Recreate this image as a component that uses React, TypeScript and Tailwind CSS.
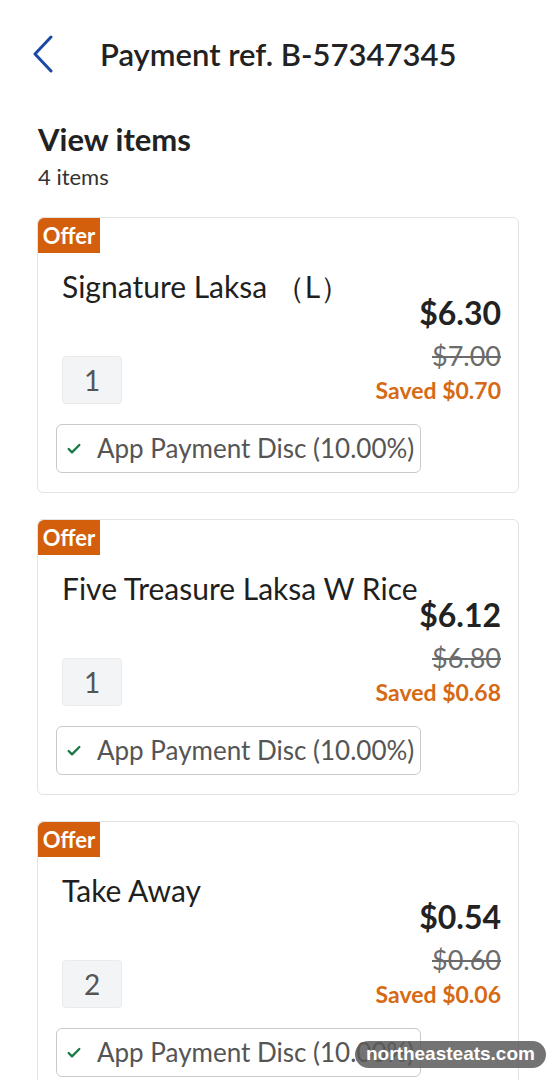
import { Check } from "lucide-react";

type Item = {
  name: string;
  qty: number;
  price: string;
  original: string;
  saved: string;
};

const ITEMS: Item[] = [
  { name: "Signature Laksa （L）", qty: 1, price: "$6.30", original: "$7.00", saved: "$0.70" },
  { name: "Five Treasure Laksa W Rice", qty: 1, price: "$6.12", original: "$6.80", saved: "$0.68" },
  { name: "Take Away", qty: 2, price: "$0.54", original: "$0.60", saved: "$0.06" },
  { name: "Take Away", qty: 2, price: "$0.54", original: "$0.60", saved: "$0.06" },
];

function ItemCard({ item }: { item: Item }) {
  return (
    <div className="border border-[#e3e3e3] rounded-md pl-[18px] pr-[17px] pb-[19px]">
      <div className="-ml-[18px] h-[35px] w-[62px] bg-[#d35f0c] rounded-tl-md flex items-center justify-center text-white text-[22px] font-bold">
        Offer
      </div>
      <div className="ml-[6px] mt-[16px] text-[30px] leading-[34px] text-[#1f1f1f] whitespace-nowrap">
        {item.name}
      </div>
      <div className="flex items-end justify-between -mt-[8px]">
        <div className="ml-[6px] mb-[1px] w-[60px] h-[48px] bg-[#f3f4f5] border border-[#ebebeb] rounded-sm flex items-center justify-center text-[28px] text-[#555]">
          {item.qty}
        </div>
        <div className="flex flex-col items-end">
          <div className="text-[32px] leading-[36px] font-bold text-[#222]">{item.price}</div>
          <div className="mt-[9px] text-[27px] leading-[32px] text-[#6b6b6b] line-through">{item.original}</div>
          <div className="mt-[3px] text-[23px] leading-[30px] font-bold text-[#d66a14]">Saved {item.saved}</div>
        </div>
      </div>
      <div className="mt-[19px] inline-flex items-center h-[49px] pl-[9px] pr-[6px] gap-[15px] border border-[#c9c9c9] rounded-md">
        <Check className="w-[16px] h-[16px] text-[#177a45]" strokeWidth={3.5} />
        <span className="text-[26px] text-[#555] whitespace-nowrap">App Payment Disc (10.00%)</span>
      </div>
    </div>
  );
}

export default function App() {
  return (
    <div className="relative w-[556px] h-[1080px] overflow-hidden bg-white font-['Lato','Noto_Sans',sans-serif]">
      <div className="flex items-center h-[108px] pl-[32px]">
        <svg width="22" height="38" viewBox="0 0 22 38" className="shrink-0">
          <path d="M19 2 L3 19 L19 36" fill="none" stroke="#1a4aa6" strokeWidth="3" strokeLinecap="round" strokeLinejoin="round" />
        </svg>
        <h1 className="ml-[46px] text-[31px] font-semibold text-[#222]">Payment ref. B-57347345</h1>
      </div>
      <div className="px-[38px] pt-[13px]">
        <h2 className="text-[31px] font-bold text-[#222] leading-[36px]">View items</h2>
        <div className="text-[22px] text-[#333] leading-[26px] mt-[7px]">4 items</div>
      </div>
      <div className="mt-[27px] ml-[37px] w-[482px] flex flex-col gap-[26px]">
        {ITEMS.map((item, i) => (
          <ItemCard key={i} item={item} />
        ))}
      </div>
      <div className="absolute left-[355px] top-[1041px] h-[27px] px-[11px] rounded-full bg-[#5a5a5a]/85 flex items-center text-white text-[19px] font-bold font-['Liberation_Sans',sans-serif]">
        northeasteats.com
      </div>
    </div>
  );
}
